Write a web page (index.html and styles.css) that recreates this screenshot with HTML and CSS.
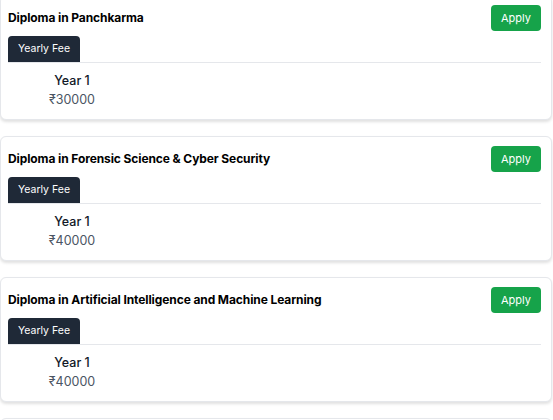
FILE: index.html
```html
<!DOCTYPE html>
<html>
<head>
<meta charset="utf-8">
<link rel="stylesheet" href="styles.css">
</head>
<body>
<div class="list">
  <div class="card">
    <div class="head">
      <h3 class="title">Diploma in Panchkarma</h3>
      <button class="apply">Apply</button>
    </div>
    <div class="tabs"><span class="tab">Yearly Fee</span></div>
    <div class="fees">
      <div class="fee"><div class="year">Year 1</div><div class="amt">₹30000</div></div>
    </div>
  </div>
  <div class="card">
    <div class="head">
      <h3 class="title">Diploma in Forensic Science &amp; Cyber Security</h3>
      <button class="apply">Apply</button>
    </div>
    <div class="tabs"><span class="tab">Yearly Fee</span></div>
    <div class="fees">
      <div class="fee"><div class="year">Year 1</div><div class="amt">₹40000</div></div>
    </div>
  </div>
  <div class="card">
    <div class="head">
      <h3 class="title">Diploma in Artificial Intelligence and Machine Learning</h3>
      <button class="apply">Apply</button>
    </div>
    <div class="tabs"><span class="tab">Yearly Fee</span></div>
    <div class="fees">
      <div class="fee"><div class="year">Year 1</div><div class="amt">₹40000</div></div>
    </div>
  </div>
  <div class="card"></div>
</div>
</body>
</html>
```
FILE: styles.css
```css
html, body {
  margin: 0;
  padding: 0;
  background: #ffffff;
  font-family: "Inter", "Open Sans", sans-serif;
  color: #111827;
}
body {
  height: 420px;
  overflow: hidden;
}
.list {
  display: flex;
  flex-direction: column;
  gap: 16px;
  margin-top: -5px;
  width: 552px;
}
.card {
  box-sizing: border-box;
  height: 125px;
  flex: none;
  border: 1px solid #e5e7eb;
  border-radius: 6px;
  background: #fff;
  box-shadow: 0 2px 3px rgba(0,0,0,0.12);
  padding: 9px 10px 0 7px;
}
.head {
  display: flex;
  justify-content: space-between;
  align-items: center;
  height: 26px;
}
.title {
  margin: 0 0 1.5px 0;
  font-size: 12px;
  font-weight: 700;
  color: #000;
  letter-spacing: -0.1px;
}
.apply {
  background: #16a34a;
  color: #fff;
  border: none;
  border-radius: 4px;
  width: 50px;
  height: 26px;
  font-family: inherit;
  font-size: 11px;
  padding: 0;
}
.tabs {
  margin-top: 5px;
  border-bottom: 1px solid #e5e7eb;
  display: flex;
}
.tab {
  background: #1f2937;
  color: #fff;
  font-size: 10.5px;
  width: 72px;
  text-align: center;
  height: 26px;
  line-height: 26px;
  border-radius: 4px 4px 0 0;
}
.fees {
  display: grid;
  grid-template-columns: repeat(4, 128px);
  padding-top: 8px;
}
.fee {
  text-align: center;
}
.year {
  font-size: 12.5px;
  font-weight: 500;
  color: #111827;
  line-height: 19px;
}
.amt {
  font-size: 12.5px;
  color: #4b5563;
  line-height: 19px;
}
```
